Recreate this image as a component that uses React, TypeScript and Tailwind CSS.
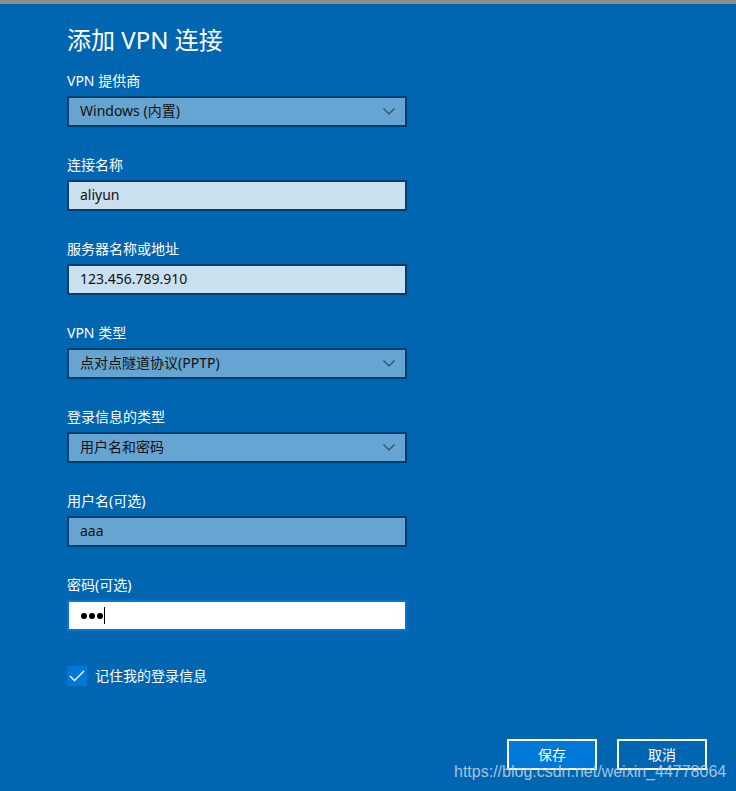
import React from "react";

const font = { fontFamily: '"Noto Sans", "Noto Sans CJK SC", sans-serif' };

function Chevron() {
  return (
    <svg width="12" height="7" viewBox="0 0 12 7" className="shrink-0">
      <polyline points="0.5,0.5 6,6 11.5,0.5" fill="none" stroke="#2a4a66" strokeWidth="1.2" />
    </svg>
  );
}

function Label({ children }: { children: React.ReactNode }) {
  return <div className="h-[20px] leading-[20px] text-[14px] text-white mb-[5px]">{children}</div>;
}

function Select({ value }: { value: string }) {
  return (
    <div className="h-[31px] w-[340px] border-2 border-[#003e70] bg-[#66a5d2] flex items-center justify-between pl-[11px] pr-[10px] pb-[1px]">
      <span className="text-[14px] text-[#111] leading-none">{value}</span>
      <Chevron />
    </div>
  );
}

function Input({ value, dark }: { value: string; dark?: boolean }) {
  return (
    <div
      className={`h-[31px] w-[340px] border-2 border-[#003e70] flex items-center pl-[11px] pb-[1px] ${
        dark ? "bg-[#66a5d2]" : "bg-[#cbe0ef]"
      }`}
    >
      <span className="text-[14px] text-[#111] leading-none">{value}</span>
    </div>
  );
}

function Group({ label, children }: { label: string; children: React.ReactNode }) {
  return (
    <div className="flex flex-col mb-[28px]">
      <Label>{label}</Label>
      {children}
    </div>
  );
}

export default function App() {
  return (
    <div className="relative w-[736px] h-[791px] overflow-hidden bg-[#0066b2]" style={font}>
      <div className="h-[4px] bg-[#8e8e8e]" />
      <div className="pl-[67px] pt-[20px]">
        <div className="h-[32px] leading-[32px] text-[24px] text-white mb-[15px]">添加 VPN 连接</div>
        <Group label="VPN 提供商">
          <Select value="Windows (内置)" />
        </Group>
        <Group label="连接名称">
          <Input value="aliyun" />
        </Group>
        <Group label="服务器名称或地址">
          <Input value="123.456.789.910" />
        </Group>
        <Group label="VPN 类型">
          <Select value="点对点隧道协议(PPTP)" />
        </Group>
        <Group label="登录信息的类型">
          <Select value="用户名和密码" />
        </Group>
        <Group label="用户名(可选)">
          <Input value="aaa" dark />
        </Group>
        <div className="flex flex-col">
          <Label>密码(可选)</Label>
          <div className="h-[31px] w-[340px] border-2 border-[#0078d7] bg-white flex items-center pl-[12px]">
            <span className="w-[6px] h-[6px] rounded-full bg-black" />
            <span className="ml-[2px] w-[6px] h-[6px] rounded-full bg-black" />
            <span className="ml-[2px] w-[6px] h-[6px] rounded-full bg-black" />
            <span className="ml-[1px] w-[1px] h-[17px] bg-black" />
          </div>
        </div>
        <div className="flex items-center mt-[35px] h-[20px]">
          <div className="w-[20px] h-[20px] bg-[#0078d7] flex items-center justify-center">
            <svg width="16" height="12" viewBox="0 0 16 12">
              <polyline points="1,6 5.5,10.5 15,1" fill="none" stroke="white" strokeWidth="1.4" />
            </svg>
          </div>
          <span className="ml-[8px] text-[14px] text-white leading-none pb-[1px]">记住我的登录信息</span>
        </div>
      </div>
      <div className="absolute left-0 right-0 top-[739px] flex justify-end gap-[20px] pr-[29px]">
        <div className="w-[90px] h-[31px] border-2 border-white bg-[#0078d7] flex items-center justify-center text-[14px] text-white">
          保存
        </div>
        <div className="w-[90px] h-[31px] border-2 border-white flex items-center justify-center text-[14px] text-white">
          取消
        </div>
      </div>
      <div
        className="absolute left-[454px] top-[761px] text-[16px] leading-[22px] text-[#b9cde0] opacity-90"
        style={{ fontFamily: '"Liberation Sans", Arial, sans-serif' }}
      >
        https://blog.csdn.net/weixin_44778064
      </div>
    </div>
  );
}
